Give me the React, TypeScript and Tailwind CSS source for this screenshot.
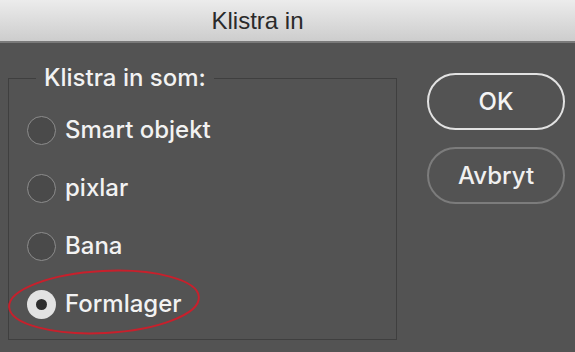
import React from "react";

const options = ["Smart objekt", "pixlar", "Bana", "Formlager"];

function Radio({ checked }: { checked?: boolean }) {
  if (checked) {
    return (
      <span className="flex h-[29px] w-[29px] shrink-0 items-center justify-center rounded-full bg-[#e2e2e2]">
        <span className="h-[11px] w-[11px] rounded-full bg-[#2e2e2e]" />
      </span>
    );
  }
  return <span className="h-[29px] w-[29px] shrink-0 rounded-full border-[1.5px] border-[#8c8c8c] bg-[#4a4a4a]" />;
}

export default function App() {
  return (
    <div
      className="relative flex h-[352px] w-[575px] flex-col overflow-hidden bg-[#535353]"
      style={{ fontFamily: 'Inter, "Liberation Sans", Arial, sans-serif' }}
    >
      <div className="flex h-[43px] shrink-0 items-center justify-center border-b-2 border-[#7a7a7a] bg-gradient-to-b from-[#ececec] to-[#cdcdcd] pr-[60px]">
        <span className="text-[24px] text-[#2a2a2a]" style={{ fontFamily: '"Liberation Sans", Arial, sans-serif' }}>
          Klistra in
        </span>
      </div>

      <div className="flex flex-1 pl-[8px] pt-[23px]">
        <fieldset className="h-[274px] w-[389px] border border-[#3f3f3f] pl-[18px] pt-[11px]">
          <legend className="ml-[9px] px-[8px] text-[24px] font-medium leading-[24px] text-[#f2f2f2]">
            Klistra in som:
          </legend>
          {options.map((o, i) => (
            <div key={o} className="flex h-[58px] items-center gap-[9px]">
              <Radio checked={i === 3} />
              <span className="text-[24px] font-medium text-[#f2f2f2]">{o}</span>
            </div>
          ))}
        </fieldset>

        <div className="ml-[30px] flex flex-col gap-[17px] pt-[7px]">
          <button className="flex h-[57px] w-[138px] items-center justify-center rounded-full border-2 border-[#e2e2e2] text-[24px] font-medium text-[#f4f4f4]">
            OK
          </button>
          <button className="flex h-[57px] w-[138px] items-center justify-center rounded-full border-2 border-[#7c7c7c] text-[24px] font-medium text-[#f0f0f0]">
            Avbryt
          </button>
        </div>
      </div>

      <svg className="pointer-events-none absolute left-0 top-0" width="575" height="352">
        <ellipse
          cx="104"
          cy="302"
          rx="95"
          ry="31"
          fill="none"
          stroke="#c8202c"
          strokeWidth="2"
          transform="rotate(-3 104 302)"
        />
      </svg>
    </div>
  );
}
